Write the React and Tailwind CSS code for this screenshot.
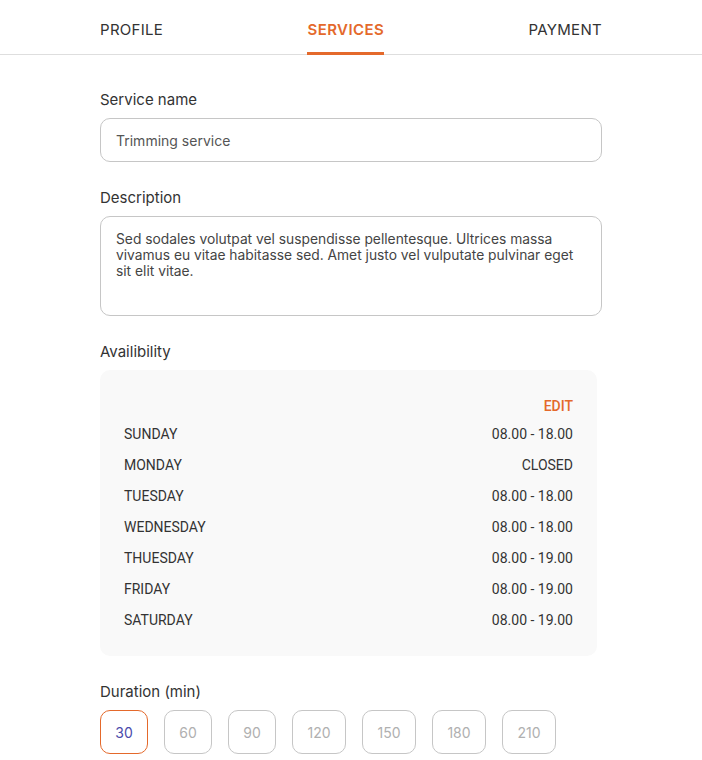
import React, { useState } from 'react';

const schedule = [
  { day: 'SUNDAY', hours: '08.00 - 18.00' },
  { day: 'MONDAY', hours: 'CLOSED' },
  { day: 'TUESDAY', hours: '08.00 - 18.00' },
  { day: 'WEDNESDAY', hours: '08.00 - 18.00' },
  { day: 'THUESDAY', hours: '08.00 - 19.00' },
  { day: 'FRIDAY', hours: '08.00 - 19.00' },
  { day: 'SATURDAY', hours: '08.00 - 19.00' },
];

const durations = [
  { value: 30, w: 'w-[48px]' },
  { value: 60, w: 'w-[48px]' },
  { value: 90, w: 'w-[48px]' },
  { value: 120, w: 'w-[54px]' },
  { value: 150, w: 'w-[54px]' },
  { value: 180, w: 'w-[54px]' },
  { value: 210, w: 'w-[54px]' },
];

const Label = ({ children }) => (
  <div className="text-[15px] leading-5 text-[#333] mb-2">{children}</div>
);

export default function App() {
  const [duration, setDuration] = useState(30);

  return (
    <div className="min-h-[760px] bg-white font-['Inter','Noto_Sans',sans-serif]">
      {/* Tabs */}
      <div className="border-b border-[#dedede]">
        <div className="w-[502px] mx-[100px] flex justify-between h-[54px] pt-[20px] text-[15px] leading-5">
          <div className="text-[#333] tracking-[0.3px]">PROFILE</div>
          <div className="relative h-[34px] text-[#e4692b] font-semibold tracking-[0.4px]">
            SERVICES
            <div className="absolute left-[-1px] right-0 bottom-[-1px] h-[3px] bg-[#e4692b]" />
          </div>
          <div className="text-[#333] tracking-[0.3px]">PAYMENT</div>
        </div>
      </div>

      <div className="w-[502px] ml-[100px] pt-[35px] pb-4">
        <Label>Service name</Label>
        <div className="h-[44px] border border-[#c6c6c6] rounded-[10px] flex items-center px-[15px] text-[14px] text-[#555]">
          Trimming service
        </div>

        <div className="mt-[26px]">
          <Label>Description</Label>
          <div className="h-[100px] border border-[#c6c6c6] rounded-[10px] pl-[15px] pr-[20px] pt-[14px] text-[13.8px] leading-[16px] text-[#444]">
            Sed sodales volutpat vel suspendisse pellentesque. Ultrices massa vivamus eu vitae habitasse sed. Amet justo vel vulputate pulvinar eget sit elit vitae.
          </div>
        </div>

        <div className="mt-[26px]">
          <Label>Availibility</Label>
          <div className="w-[497px] bg-[#f9f9f9] rounded-[10px] px-6 pt-[26px] pb-[20px] font-['Roboto','Liberation_Sans',sans-serif] text-[14px] text-[#333]">
            <div className="flex justify-end h-5 items-center text-[#e4692b] font-medium">EDIT</div>
            <div className="mt-[3px]">
              {schedule.map((s) => (
                <div key={s.day} className="flex justify-between items-center h-[31px]">
                  <span>{s.day}</span>
                  <span>{s.hours}</span>
                </div>
              ))}
            </div>
          </div>
        </div>

        <div className="mt-[26px]">
          <Label>Duration (min)</Label>
          <div className="flex gap-4">
            {durations.map((d) => (
              <button
                key={d.value}
                onClick={() => setDuration(d.value)}
                className={`${d.w} h-[44px] rounded-[10px] border text-[14px] flex items-center justify-center ${
                  duration === d.value
                    ? 'border-[#e4692b] text-[#4b4bab]'
                    : 'border-[#c6c6c6] text-[#b0b0b0]'
                }`}
              >
                {d.value}
              </button>
            ))}
          </div>
        </div>
      </div>
    </div>
  );
}
